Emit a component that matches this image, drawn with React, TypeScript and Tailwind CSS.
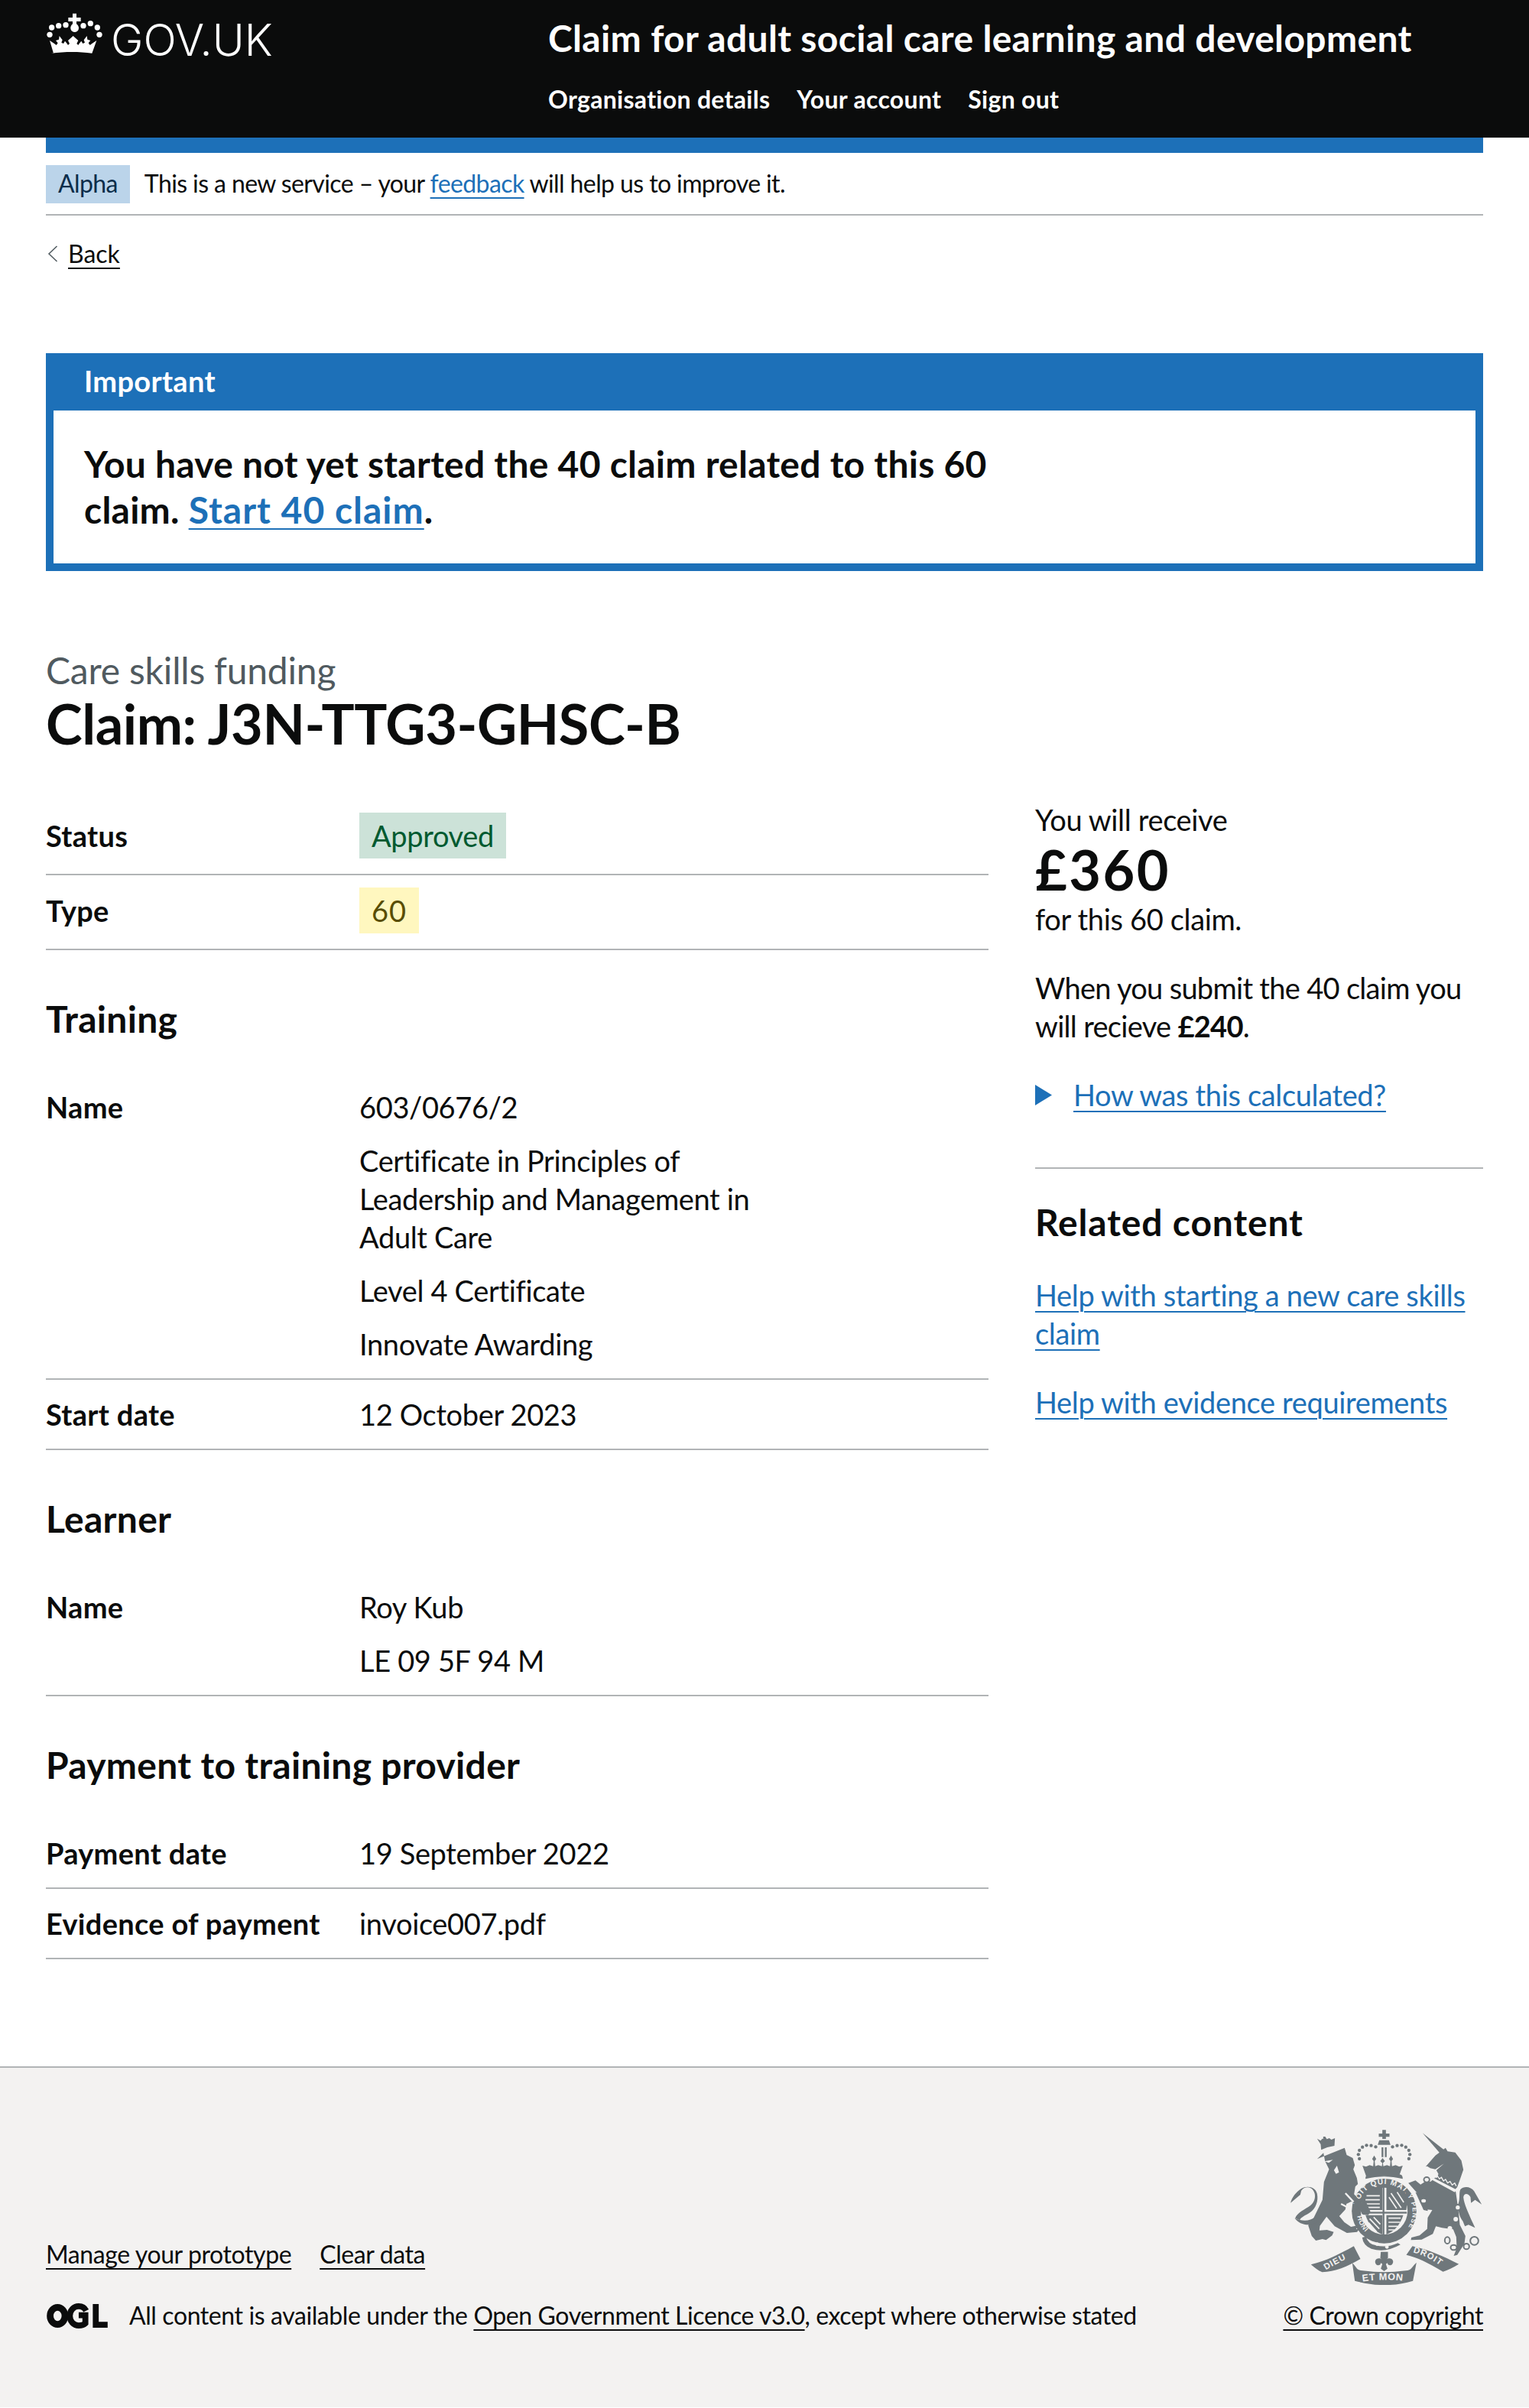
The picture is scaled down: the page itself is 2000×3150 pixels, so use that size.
const GREY = "#6f777b";

const rowClass = "flex border-b-2 border-[#b1b4b6] py-5";
const keyClass = "w-[410px] shrink-0 font-bold tracking-[0.3px]";
const h2Class = "mt-[60px] mb-10 text-[48px] leading-[60px] font-bold tracking-[0.3px]";
const linkClass = "text-[#1d70b8] underline decoration-2 underline-offset-[6px]";
const footLinkClass = "underline decoration-2 underline-offset-[6px]";

function HeaderCrown() {
  return (
    <svg viewBox="55 50 225 162" className="h-[54px] w-[75px]" fill="#fff" aria-hidden="true">
      {[[105, 100], [133, 97], [202, 100], [230, 91], [257, 107], [265, 135], [70, 135]].map(([cx, cy]) => (
        <circle key={`${cx}-${cy}`} cx={cx} cy={cy} r="11" />
      ))}
      <circle cx="78" cy="107" r="11" />
      <path d="M160 52h15v16h17v15h-17v10c8 6 11 14 8 22-2 5-8 9-15 10-7-1-13-5-15-10-3-8 0-16 7-22V83h-17V68h17z" />
      <path d="M85 208 70 158l18 12 8 6 6-8-8-10 12-4 2-14 12 16-4 10 8 4 6-10 8 10 4 6 6-6-6-12 20-18 20 18-6 12 6 6 4-6 8-10 6 10 8-4-4-10 12-16 2 14 12 4-8 10 6 8 8-6 18-12-18 50c-50-7-105-7-160 0z" />
    </svg>
  );
}

function Crest() {
  return (
    <svg viewBox="130 75 755 615" className="h-[205px] w-[252px]" aria-hidden="true">
      <defs>
        <path id="garter-top" d="M391 400a106 106 0 1 1 212 0" />
        <path id="garter-right" d="M588 340a110 110 0 0 1-20 150" />
        <path id="garter-left" d="M392 420a106 106 0 0 0 40 70" />
        <path id="rib-left" d="M268 632Q320 600 372 578" />
        <path id="rib-mid" d="M412 677Q495 664 582 676" />
        <path id="rib-right" d="M610 562Q680 580 735 630" />
      </defs>

      {/* crown */}
      <g fill={GREY}>
        <path d="M490 82h14v14h14v13h-14v8h-14v-8h-14V96h14z" />
        <path d="M478 122h38l6 18h-50zM487 150h7v38h-7zM500 150h7v38h-7z" />
        {[
          [400, 195], [396, 178], [400, 162], [412, 149], [428, 142], [446, 143], [464, 148],
          [594, 195], [598, 178], [594, 162], [582, 149], [566, 142], [548, 143], [530, 148],
        ].map(([cx, cy]) => (
          <circle key={`${cx}-${cy}`} cx={cx} cy={cy} r="6.5" />
        ))}
        <path d="M412 222l14 4 14-6 14 4 2-20-6-8 8-14 8 14-6 8 2 20 12-4 14 4 2-12-8-8 9-12 9 12-8 8 2 12 14-4 12 4 2-20-6-8 8-14 8 14-6 8 2 20 14-4 14 6 14-4-14 40H426z" />
        <path d="M424 274c0-12 4-17 14-18 38 8 80 8 118 0 10 1 14 6 14 18-50-12-96-12-146 0z" />
      </g>

      {/* garter and shield */}
      <circle cx="497" cy="400" r="127" fill={GREY} />
      <circle cx="497" cy="400" r="92" fill="#f3f2f1" />
      <g fill="#f3f2f1" fontFamily="Liberation Sans, sans-serif" fontWeight="700" fontSize="30">
        <text letterSpacing="3"><textPath href="#garter-top" startOffset="22">SOIT QUI MAL</textPath></text>
        <text letterSpacing="3" fontSize="26"><textPath href="#garter-right">Y PENSE</textPath></text>
        <text letterSpacing="2" fontSize="26"><textPath href="#garter-left">HONI</textPath></text>
      </g>
      <g fill={GREY}>
        <path d="M418 322c22-8 46-14 72-16v90h-78c-4-26-2-52 6-74z" />
        <path d="M506 306c26 2 50 8 72 16 8 22 10 48 6 74h-78z" />
        <path d="M424 416h66v76c-30-12-54-38-66-76z" />
        <path d="M506 416h66c-12 38-36 64-66 76z" />
        <rect x="491" y="300" width="7" height="212" />
        <rect x="408" y="403" width="178" height="7" />
      </g>
      <g stroke="#f3f2f1" strokeWidth="5" fill="none">
        <path d="M428 340h52M424 356h56M426 372h54M426 386h54" />
        <path d="M524 330l40 58M516 346l30 44M548 326l26 40" />
        <path d="M440 430l38 40M436 446l32 36M456 424l26 28" />
        <path d="M514 428h48M514 444h46M514 460h36M514 474h24" />
      </g>

      {/* buckle end of the garter */}
      <path d="M425 500q10 30 38 34 44 12 88-8l10 6q-60 34-114 16-32-12-36-44z" fill={GREY} />
      <circle cx="470" cy="530" r="7" fill="#f3f2f1" />
      <circle cx="508" cy="541" r="7" fill="#f3f2f1" />

      {/* lion */}
      <g fill={GREY}>
        <path d="M234 196l48-20 60-24 8 28 24 12 8 28-6 16 14 34 4 24-10 10-5 30 30 34 18-2 16 36-8 14-22-2-22-34-22-18-20 10-4 22-24 26 20 24 26 18 28-6-8 16 14-4-10 14-40 4-48-26-32-38-26 36-2 18 30-2 26 8-6 14-24 18-14-4-26 6-16-18-14-42 22-30 34-70 6-70 20-50-16-32-6-32z" />
        <path d="M146 428c28 12 58 14 82-6l8 20c-30 20-68 14-90-14z" />
        <path d="M148 428c8-22 38-34 60-50 18-14 24-42 10-60-12-16-34-14-46 2l-4 16-38 32c4-20 22-44 42-56 24-14 56-6 62 20 6 30-6 58-28 74-18 12-36 18-40 30z" />
        <path d="M248 138l-14-22 14 8 6-8 8 2 4-10 6 10 10-4 8 6 14-6-2 30-28 6-24 10z" />
        <rect x="258" y="108" width="8" height="24" />
      </g>
      <path d="M262 205l34-6-16 12zM312 222l8 26-12 6-8-14z" fill="#f3f2f1" />
      <path d="M345 330l32 34M328 372l30 16" stroke="#f3f2f1" strokeWidth="7" fill="none" />

      {/* unicorn */}
      <g fill={GREY}>
        <path d="M648 94l84 66-12 18z" />
        <path d="M660 226l38-44 40-30 8 14 30 4 24 32 8 36-14 40-10 28-14 16-60-40-8-4 8-24-8-14 30-26-34 22-20-4-12-8z" />
        <path d="M592 290l28-10 20 16 16-10 24-2 20-18 78 58 10 70 6 60 22 44-4 30-28 44-14 4 12-30-2-44-12-30-44-6-24-6-12 30-44 22-42 2 2-10 32-8 30-26 2-44 18-30-36-4 8-18-18-30z" />
        <path d="M620 326l44 12 4 62-16-4z" />
        <path d="M788 372c8-20 2-44 8-56 14-16 42-12 54 6l30 52-26-18-16 12-2-22c-10-18-26-16-28 0 4 32 18 56 30 86l16 34-26-12-14 6-8-20c-14-18-20-44-18-68z" />
      </g>
      <path d="M686 268l94 48-6 10-92-50z" fill="#f3f2f1" />
      <path d="M692 260l8 8 6-6 8 12 8-6 8 14 8-6 8 14 10-6 8 14 10-8 6 12" stroke="#f3f2f1" strokeWidth="4" fill="none" />
      <g fill="#f3f2f1">
        <circle cx="778" cy="432" r="9" />
        <circle cx="755" cy="468" r="9" />
      </g>
      <g stroke={GREY} strokeWidth="6" fill="#f3f2f1">
        <ellipse cx="664" cy="277" rx="11" ry="10" />
        <ellipse cx="652" cy="360" rx="12" ry="10" />
        <ellipse cx="786" cy="386" rx="11" ry="11" />
        <ellipse cx="745" cy="515" rx="10" ry="13" />
        <ellipse cx="770" cy="543" rx="12" ry="10" />
        <circle cx="820" cy="539" r="11" />
        <circle cx="851" cy="517" r="16" />
      </g>

      {/* motto ribbon */}
      <g fill={GREY}>
        <path d="M210 610c60-14 110-40 168-72l26 50c-50 30-100 50-150 52-16-6-30-18-44-30z" />
        <path d="M372 604c20 18 14 28 40 30 60 8 110 8 170 0 24-2 24-16 42-32l-14 72c-70 22-146 22-228 0z" />
        <path d="M584 572l24-34c66 14 120 40 182 70-22 14-44 24-62 30-60-36-100-56-144-66z" />
      </g>
      <g fill="#f3f2f1" fontFamily="Liberation Sans, sans-serif" fontWeight="700" fontSize="34">
        <text letterSpacing="3"><textPath href="#rib-left">DIEU</textPath></text>
        <text letterSpacing="2" fontSize="38"><textPath href="#rib-mid">ET MON</textPath></text>
        <text letterSpacing="3"><textPath href="#rib-right">DROIT</textPath></text>
      </g>

      {/* fleur-de-lis under the shield */}
      <path d="M484 560h28v24l-6 6c8-6 22-6 26 6 2 12-10 22-20 14l-2-6-6 4 6 18-13 10-13-10 6-18-6-4-2 6c-10 8-22-2-20-14 4-12 18-12 26-6l-6-6z" fill={GREY} />
    </svg>
  );
}

function OglLogo() {
  return (
    <svg viewBox="0 0 82 34" className="h-[33px] w-[82px]" fill="none" stroke="#0b0c0c" aria-hidden="true">
      <ellipse cx="14.5" cy="17" rx="10" ry="11.5" strokeWidth="9" />
      <path d="M53 10c-2-4-6-6-10-6-7 0-12 6-12 13s5 13 12 13c3 0 7-1 9-3v-11H43" strokeWidth="8" />
      <path d="M66 1v28h16" strokeWidth="8" />
    </svg>
  );
}

function Row({ label, children }: { label: string; children: React.ReactNode }) {
  return (
    <div className={rowClass}>
      <div className={keyClass}>{label}</div>
      <div className="flex flex-col gap-5">{children}</div>
    </div>
  );
}

export default function App() {
  return (
    <div className="min-h-[3150px] bg-white font-[Lato,sans-serif] text-[38px] leading-[50px] tracking-[-0.35px] text-[#0b0c0c]">
      <header className="flex h-[180px] bg-[#0b0c0c] px-[60px] text-white">
        <div className="flex w-[657px] shrink-0 items-start gap-[10px] pt-[17px]">
          <HeaderCrown />
          <span className="mt-[5px] font-[Inter,sans-serif] text-[57px] leading-[62px] font-light tracking-normal">GOV.UK</span>
        </div>
        <div className="pt-5">
          <div className="text-[48px] leading-[60px] font-bold tracking-[0.34px]">Claim for adult social care learning and development</div>
          <nav className="mt-[30px] flex gap-[35px] text-[32px] leading-10 font-bold tracking-[0.3px]">
            <span>Organisation details</span>
            <span>Your account</span>
            <span>Sign out</span>
          </nav>
        </div>
      </header>

      <div className="px-[60px]">
        <div className="h-5 bg-[#1d70b8]" />
        <div className="flex items-start gap-[19px] border-b-2 border-[#b1b4b6] pt-4 pb-[14px] text-[32px] leading-[47px] tracking-[-0.6px]">
          <span className="h-[50px] bg-[#bbd4ea] px-4 text-[#0c2d4a]">Alpha</span>
          <span>
            This is a new service – your <a className={linkClass}>feedback</a> will help us to improve it.
          </span>
        </div>

        <div className="mt-[30px] flex items-center gap-[13px] text-[32px] leading-10 tracking-normal">
          <svg viewBox="0 0 14 22" className="ml-[2px] h-[22px] w-[14px]" fill="none" stroke="#505a5f" strokeWidth="1.5" aria-hidden="true">
            <path d="M12.5 1 2 11l10.5 10" />
          </svg>
          <a className={footLinkClass}>Back</a>
        </div>

        <section className="mt-[110px] border-[10px] border-[#1d70b8]">
          <div className="bg-[#1d70b8] pb-[16px] pl-10 pt-1 text-[38px] leading-[45px] font-bold tracking-[0.3px] text-white">Important</div>
          <div className="px-10 py-[40px] text-[48px] leading-[60px] font-bold tracking-[0.25px]">
            You have not yet started the 40 claim related to this 60
            <br />
            claim. <a className={`${linkClass} tracking-[1px]`}>Start 40 claim</a>.
          </div>
        </section>

        <div className="mt-[100px] text-[48px] leading-[60px] tracking-[-0.2px] text-[#505a5f]">Care skills funding</div>
        <h1 className="text-[72px] leading-[78px] font-bold tracking-[-0.43px]">Claim: J3N-TTG3-GHSC-B</h1>

        <div className="mt-[62px] flex gap-[61px]">
          <main className="w-[1233px] shrink-0 pt-3">
            <div className="flex border-b-2 border-[#b1b4b6] pt-1 pb-5">
              <div className={`${keyClass} self-center`}>Status</div>
              <span className="bg-[#cce2d8] px-4 py-[5px] text-[#005a30]">Approved</span>
            </div>
            <div className="flex border-b-2 border-[#b1b4b6] pt-4 pb-5">
              <div className={`${keyClass} self-center`}>Type</div>
              <span className="bg-[#fff7bf] px-4 py-[5px] tracking-[1px] text-[#594d00]">60</span>
            </div>

            <h2 className={h2Class}>Training</h2>
            <Row label="Name">
              <div>603/0676/2</div>
              <div>
                Certificate in Principles of
                <br />
                Leadership and Management in
                <br />
                Adult Care
              </div>
              <div>Level 4 Certificate</div>
              <div>Innovate Awarding</div>
            </Row>
            <Row label="Start date">
              <div>12 October 2023</div>
            </Row>

            <h2 className={h2Class}>Learner</h2>
            <Row label="Name">
              <div>Roy Kub</div>
              <div>LE 09 5F 94 M</div>
            </Row>

            <h2 className={h2Class}>Payment to training provider</h2>
            <Row label="Payment date">
              <div>19 September 2022</div>
            </Row>
            <Row label="Evidence of payment">
              <div>invoice007.pdf</div>
            </Row>
          </main>

          <aside className="flex-1">
            <div>You will receive</div>
            <div className="text-[72px] leading-[80px] font-bold tracking-[2.5px]">£360</div>
            <div>for this 60 claim.</div>
            <p className="mt-10 tracking-[-0.7px]">
              When you submit the 40 claim you
              <br />
              will recieve <b>£240</b>.
            </p>
            <div className="mt-10 flex items-center gap-[28px]">
              <svg viewBox="0 0 22 27" className="h-[27px] w-[22px]" fill="#1d70b8" aria-hidden="true">
                <path d="M0 0l22 13.500L0 27z" />
              </svg>
              <a className={linkClass}>How was this calculated?</a>
            </div>
            <div className="mt-[70px] border-t-2 border-[#b1b4b6]" />
            <h2 className="mt-10 text-[48px] leading-[60px] font-bold tracking-[0.85px]">Related content</h2>
            <p className="mt-10">
              <a className={linkClass}>
                Help with starting a new care skills
                <br />
                claim
              </a>
            </p>
            <p className="mt-10">
              <a className={linkClass}>Help with evidence requirements</a>
            </p>
          </aside>
        </div>
      </div>

      <footer className="mt-[140px] flex h-[446px] items-end justify-between border-t-2 border-[#b1b4b6] bg-[#f3f2f1] px-[60px] pb-[100px] text-[32px] leading-10 tracking-[-0.4px]">
        <div>
          <div className="flex gap-[37px]">
            <a className={footLinkClass}>Manage your prototype</a>
            <a className={footLinkClass}>Clear data</a>
          </div>
          <div className="mt-10 flex items-center gap-[27px]">
            <OglLogo />
            <span>
              All content is available under the <a className={footLinkClass}>Open Government Licence v3.0</a>, except where otherwise stated
            </span>
          </div>
        </div>
        <div className="flex flex-col items-end gap-[20px]">
          <Crest />
          <a className={footLinkClass}>© Crown copyright</a>
        </div>
      </footer>
    </div>
  );
}
